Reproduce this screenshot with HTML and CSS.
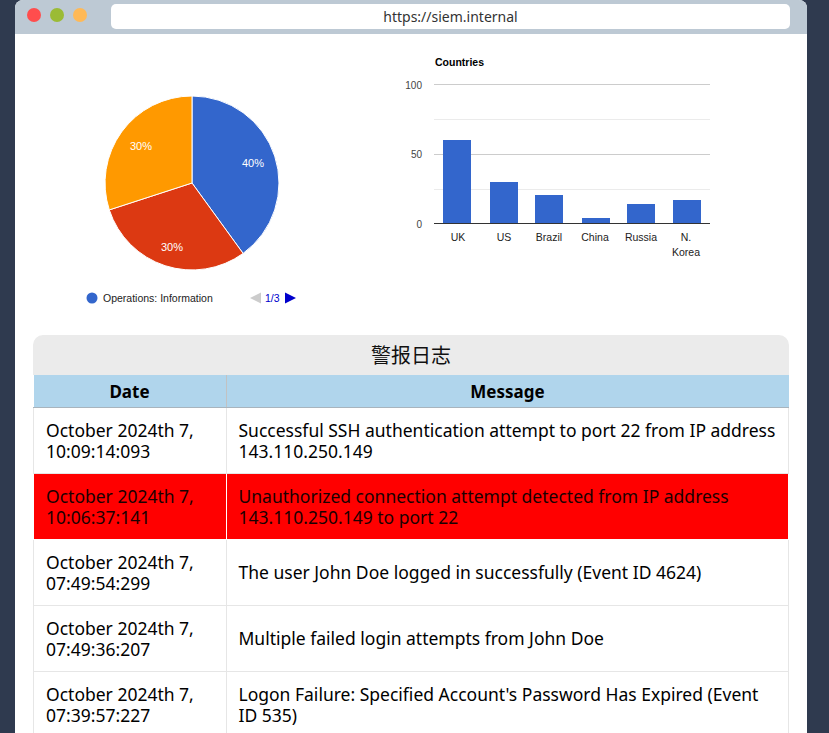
FILE: index.html
```html
<!DOCTYPE html>
<html>
<head>
<meta charset="utf-8">
<link rel="stylesheet" href="styles.css">
</head>
<body>
<div class="window">
  <div class="titlebar">
    <div class="lights">
      <span class="light red"></span>
      <span class="light green"></span>
      <span class="light yellow"></span>
    </div>
    <div class="url">https://siem.internal</div>
  </div>
  <div class="content">
    <div class="charts">
      <svg class="pie" width="360" height="301" viewBox="0 0 360 301">
        <path d="M159 149 L159 62 A87 87 0 0 1 210.1 219.4 Z" fill="#3366cc" stroke="#fff" stroke-width="1"/>
        <path d="M159 149 L210.1 219.4 A87 87 0 0 1 76.3 175.9 Z" fill="#dc3912" stroke="#fff" stroke-width="1"/>
        <path d="M159 149 L76.3 175.9 A87 87 0 0 1 159 62 Z" fill="#ff9900" stroke="#fff" stroke-width="1"/>
        <text x="220" y="133" class="pl">40%</text>
        <text x="139" y="217" class="pl">30%</text>
        <text x="108" y="116" class="pl">30%</text>
        <circle cx="59" cy="264" r="5.5" fill="#3366cc"/>
        <text x="70" y="268" class="lg">Operations: Information</text>
        <path d="M217 264 L228 258.5 L228 269.5 Z" fill="#cccccc"/>
        <text x="232" y="268" class="pg">1/3</text>
        <path d="M263 264 L252 258.5 L252 269.5 Z" fill="#0000cc"/>
      </svg>
      <svg class="bars" width="396" height="301" viewBox="0 0 396 301">
        <text x="42" y="32" class="bt">Countries</text>
        <line x1="41" y1="50.5" x2="317" y2="50.5" class="g1"/>
        <line x1="41" y1="85.5" x2="317" y2="85.5" class="g2"/>
        <line x1="41" y1="120.5" x2="317" y2="120.5" class="g1"/>
        <line x1="41" y1="155.5" x2="317" y2="155.5" class="g2"/>
        <text x="29" y="55" class="ax">100</text>
        <text x="29" y="124" class="ax">50</text>
        <text x="29" y="194" class="ax">0</text>
        <rect x="50" y="106" width="28" height="83" fill="#3366cc"/>
        <rect x="97" y="148" width="28" height="41" fill="#3366cc"/>
        <rect x="142" y="161" width="28" height="28" fill="#3366cc"/>
        <rect x="189" y="184" width="28" height="5" fill="#3366cc"/>
        <rect x="234" y="170" width="28" height="19" fill="#3366cc"/>
        <rect x="280" y="166" width="28" height="23" fill="#3366cc"/>
        <line x1="41" y1="189.5" x2="317" y2="189.5" class="base"/>
        <text x="65" y="207" class="xl">UK</text>
        <text x="111" y="207" class="xl">US</text>
        <text x="156" y="207" class="xl">Brazil</text>
        <text x="202" y="207" class="xl">China</text>
        <text x="248" y="207" class="xl">Russia</text>
        <text x="293" y="207" class="xl">N.</text>
        <text x="293" y="222" class="xl">Korea</text>
      </svg>
    </div>
    <div class="log">
      <div class="caption">警报日志</div>
      <table>
        <thead>
          <tr><th class="c-date">Date</th><th>Message</th></tr>
        </thead>
        <tbody>
          <tr><td>October 2024th 7, 10:09:14:093</td><td>Successful SSH authentication attempt to port 22 from IP address 143.110.250.149</td></tr>
          <tr class="alert"><td>October 2024th 7, 10:06:37:141</td><td>Unauthorized connection attempt detected from IP address 143.110.250.149 to port 22</td></tr>
          <tr><td>October 2024th 7, 07:49:54:299</td><td>The user John Doe logged in successfully (Event ID 4624)</td></tr>
          <tr><td>October 2024th 7, 07:49:36:207</td><td>Multiple failed login attempts from John Doe</td></tr>
          <tr><td>October 2024th 7, 07:39:57:227</td><td>Logon Failure: Specified Account's Password Has Expired (Event ID 535)</td></tr>
        </tbody>
      </table>
    </div>
  </div>
</div>
</body>
</html>
```
FILE: styles.css
```css
html, body {
  margin: 0;
  padding: 0;
  background: #2f3a4f;
  height: 733px;
  overflow: hidden;
}
.window {
  margin-left: 15px;
  width: 792px;
  background: #fff;
  border-radius: 8px 8px 0 0;
  overflow: hidden;
  font-family: "Noto Sans", sans-serif;
}
.titlebar {
  height: 34px;
  background: #bdc9d4;
  display: flex;
  align-items: flex-start;
}
.lights {
  display: flex;
  gap: 9px;
  padding: 8px 0 0 12px;
  width: 84px;
}
.light {
  width: 14px;
  height: 14px;
  border-radius: 50%;
}
.red { background: #ff4d4d; }
.green { background: #9bbb35; }
.yellow { background: #ffb957; }
.url {
  margin-top: 4px;
  width: 679px;
  height: 25px;
  background: #fff;
  border-radius: 5px;
  text-align: center;
  font-size: 14px;
  line-height: 25px;
  color: #333;
}
.content {
  padding: 0 18px;
}
.charts {
  display: flex;
  height: 301px;
}
.pie, .bars {
  display: block;
  font-family: "Liberation Sans", Arial, sans-serif;
}
.pl { fill: #fff; font-size: 11px; text-anchor: middle; }
.lg { fill: #222; font-size: 10.5px; }
.pg { fill: #0000cc; font-size: 10.5px; }
.bt { fill: #000; font-size: 10.5px; font-weight: bold; }
.ax { fill: #444; font-size: 10px; text-anchor: end; }
.xl { fill: #222; font-size: 10.5px; text-anchor: middle; }
.g1 { stroke: #cccccc; stroke-width: 1; }
.g2 { stroke: #ebebeb; stroke-width: 1; }
.base { stroke: #333; stroke-width: 1; }
.log {
  border-radius: 10px 10px 0 0;
  overflow: hidden;
  background: #fff;
}
.caption {
  height: 40px;
  background: #ebebeb;
  text-align: center;
  font-size: 20px;
  line-height: 42px;
  color: #111;
  font-family: "Noto Sans", "Noto Sans CJK SC", sans-serif;
}
table {
  width: 100%;
  border-collapse: collapse;
  font-size: 17.5px;
  color: #000;
}
th {
  background: #b0d5ec;
  height: 32px;
  font-weight: bold;
  font-size: 17px;
  border-right: 1px solid #c2c2c2;
  border-bottom: 1px solid #a8b4bd;
  padding: 0;
}
th:last-child { border-right: none; }
.c-date { width: 192px; }
td {
  border: 1px solid #e6e6e6;
  padding: 0 12px;
  height: 65px;
  line-height: 21px;
  vertical-align: middle;
}
tbody tr:first-child td { border-top: none; }
.alert td {
  background: #ff0000;
  color: #1a0000;
  border-color: #ffffff;
}
```
